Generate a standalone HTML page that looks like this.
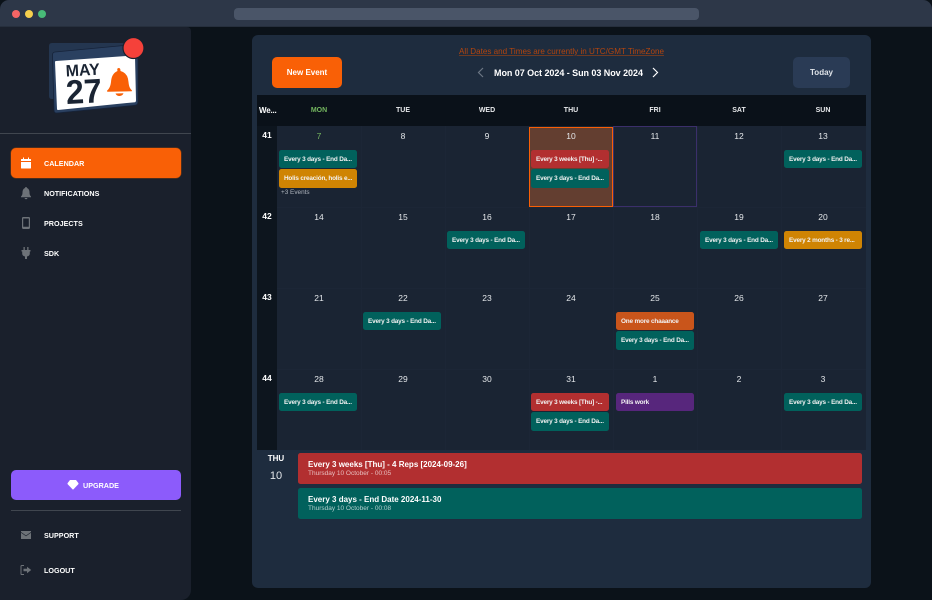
<!DOCTYPE html>
<html><head><meta charset="utf-8">
<style>
*{box-sizing:border-box}
html,body{margin:0;padding:0;width:932px;height:600px;overflow:hidden;background:#0b1219;font-family:"Liberation Sans",sans-serif;color:#fff}
.a{position:absolute}
#top{left:0;top:0;width:932px;height:27px;background:#2d3748;border-radius:9px 9px 0 0;border-bottom:1px solid #262f3d}
#side{left:0;top:27px;width:191px;height:573px;background:#1a202c;border-radius:0 4px 10px 0}
.d{width:8px;height:8px;border-radius:50%;top:10px}
.nav{left:44px;font-size:7.2px;font-weight:700;line-height:10px;white-space:nowrap}
#panel{left:252px;top:35px;width:619px;height:553px;background:#1e2c3e;border-radius:6px}
.num{width:84px;text-align:center;font-size:8.5px;line-height:10px;color:#e4e7ea}
.hd{width:84px;text-align:center;font-size:7px;font-weight:700;line-height:9px;top:106px;color:#e8eaec}
.wk{left:257px;width:20px;text-align:center;font-size:8.5px;font-weight:700;line-height:10px}
.e{width:78px;height:18.3px;border-radius:2.5px;font-size:6.4px;font-weight:700;line-height:19px;padding-left:5px;white-space:nowrap;overflow:hidden;color:#f2f2f2;letter-spacing:-.18px}
.t{background:#01615c}.r{background:#b22f30}.y{background:#cf8403}.o{background:#c9551b}.p{background:#57267c}
.big{left:298px;width:564px;height:31px;border-radius:2.5px}
.big b{position:absolute;left:10px;top:6px;font-size:8px;line-height:11px;white-space:nowrap}
.big span{position:absolute;left:10px;top:17px;font-size:6.5px;line-height:8px;white-space:nowrap;color:rgba(255,255,255,.68)}
.v{top:126px;width:1px;height:324px;background:#1c2636}
.h{left:277px;width:589px;height:1px;background:#1c2636}
</style></head><body>
<div class="a" id="top"></div>
<div class="a d" style="left:12px;background:#f56565"></div>
<div class="a d" style="left:25px;background:#f6d04d"></div>
<div class="a d" style="left:38px;background:#48bb78"></div>
<div class="a" style="left:234px;top:8px;width:465px;height:12px;border-radius:4px;background:#4a5568"></div>

<div class="a" id="side"></div>

<svg class="a" style="left:40px;top:30px" width="110" height="92" viewBox="40 30 110 92">
<path d="M52 43L128 43Q131 43 131 46V96Q131 99 128 99L52 99Q49 99 49 96V46Q49 43 52 43Z" fill="#243650"/>
<path d="M55 52L135 44.500Q138 44.300 138 47V102Q138 105 135 105.300L57 113Q54 113.300 54 110L52.500 55Q52.500 52.300 55 52Z" fill="#2a4060" stroke="#16233a" stroke-width=".8"/>
<path d="M56 61L134 55.500Q135 55.500 135 56.500L136 100Q136 102 135 102.200L58 110Q57 110 57 109L55 62Q55 61 56 61Z" fill="#fff"/>
<g transform="rotate(-3 66 76)" fill="#1a2433" font-family="'Liberation Sans',sans-serif" font-weight="700">
<text x="66" y="76.500" font-size="16.500" textLength="34" lengthAdjust="spacingAndGlyphs">MAY</text>
<text x="65" y="104" font-size="34" textLength="36" lengthAdjust="spacingAndGlyphs">27</text>
</g>
<path d="M117.500 68.500Q118 68 119 68Q120.500 68.300 120.500 71Q128 73 128.500 82C129 87 130 88.500 132 90.500L131.800 91.300L107.300 91.800L107 90.800C109.500 88.500 110.500 86 111 82Q111.500 73.500 117.500 71Q117 69.500 117.500 68.500Z" fill="#f96006"/>
<path d="M115.500 93.500L123.500 93.300Q122.500 96 119.500 96Q116.500 96 115.500 93.500Z" fill="#f96006"/>
<circle cx="133.500" cy="48" r="10.500" fill="#f5413a" stroke="#1a202c" stroke-width="1.200"/>
</svg>

<div class="a" style="left:0;top:133px;width:191px;height:1px;background:#40464f"></div>

<div class="a" style="left:11px;top:148px;width:170px;height:30px;background:#f96006;border-radius:5px;box-shadow:0 0 0 .5px #7a3a10"></div>
<svg class="a" style="left:20px;top:156px" width="12" height="14" viewBox="0 0 12 14"><path d="M1.500 3H3V1.500H4V3H8V1.500H9V3H10.500Q11 3 11 3.500V5H1V3.500Q1 3 1.500 3ZM1 6H11V12Q11 12.500 10.500 12.500H1.500Q1 12.500 1 12Z" fill="#fff"/></svg>
<div class="a nav" style="top:159px">CALENDAR</div>

<svg class="a" style="left:20px;top:186px" width="12" height="14" viewBox="0 0 12 14"><path d="M6 1Q7 1 7 2Q9.500 3 9.500 6.500C9.500 8.500 10 9.500 11 10.500V11.300H1V10.500C2 9.500 2.500 8.500 2.500 6.500Q2.500 3 5 2Q5 1 6 1ZM4.500 12H7.500Q7.200 13.300 6 13.300Q4.800 13.300 4.500 12Z" fill="#6d7278"/></svg>
<div class="a nav" style="top:189px">NOTIFICATIONS</div>

<svg class="a" style="left:20px;top:216px" width="12" height="14" viewBox="0 0 12 14"><path d="M3.200 1H8.800Q10 1 10 2.200V11.800Q10 13 8.800 13H3.200Q2 13 2 11.800V2.200Q2 1 3.200 1ZM3.200 2.500V10.800H8.800V2.500Z" fill="#6d7278"/></svg>
<div class="a nav" style="top:219px">PROJECTS</div>

<svg class="a" style="left:20px;top:246px" width="12" height="14" viewBox="0 0 12 14"><path d="M3.500 1H4.800V4H7.200V1H8.500V4H10.500V5.500H9.800V7.500Q9.800 10 7 10.500V13H5V10.500Q2.200 10 2.200 7.500V5.500H1.500V4H3.500Z" fill="#6d7278"/></svg>
<div class="a nav" style="top:249px">SDK</div>

<div class="a" style="left:11px;top:470px;width:170px;height:30px;background:#8c5bfb;border-radius:5px"></div>
<svg class="a" style="left:67px;top:479px" width="12" height="12" viewBox="0 0 12 12"><path d="M3 1H9L11.500 4.200V5L6.300 10.500H5.700L.500 5V4.200Z" fill="#fff"/></svg>
<div class="a nav" style="left:83px;top:481px">UPGRADE</div>
<div class="a" style="left:11px;top:510px;width:170px;height:1px;background:#40464f"></div>

<svg class="a" style="left:20px;top:529px" width="12" height="12" viewBox="0 0 12 12"><path d="M1 2H11V3L6 6.500L1 3Z" fill="#6d7278"/><path d="M1 3.800L6 7.300L11 3.800V10H1Z" fill="#6d7278"/></svg>
<div class="a nav" style="top:531px">SUPPORT</div>

<svg class="a" style="left:20px;top:564px" width="12" height="12" viewBox="0 0 12 12"><path d="M4 1.500H1.800Q1 1.500 1 2.300V9.700Q1 10.500 1.800 10.500H4" fill="none" stroke="#6d7278" stroke-width="1"/><path d="M7 2.700L11.200 6L7 9.300V7.300H3.500V4.700H7Z" fill="#6d7278"/></svg>
<div class="a nav" style="top:566px">LOGOUT</div>

<div class="a" id="panel"></div>
<div class="a" style="left:252px;width:619px;top:47px;text-align:center;font-size:8.1px;line-height:10px;color:#b3450f;text-decoration:underline;text-decoration-color:#6e3a22">All Dates and Times are currently in UTC/GMT TimeZone</div>
<div class="a" style="left:272px;top:57px;width:70px;height:31px;background:#f96006;border-radius:5px;text-align:center;font-size:8px;font-weight:700;line-height:32px">New Event</div>
<svg class="a" style="left:476px;top:67px" width="10" height="11" viewBox="0 0 10 11"><path d="M7 1L2.500 5.500L7 10" fill="none" stroke="#6d7785" stroke-width="1.200"/></svg>
<div class="a" style="left:494px;top:67px;font-size:9px;font-weight:700;line-height:12px;white-space:nowrap;letter-spacing:-.05px">Mon 07 Oct 2024 - Sun 03 Nov 2024</div>
<svg class="a" style="left:650px;top:67px" width="10" height="11" viewBox="0 0 10 11"><path d="M3 1L7.500 5.500L3 10" fill="none" stroke="#fff" stroke-width="1.200"/></svg>
<div class="a" style="left:793px;top:57px;width:57px;height:31px;background:#2a3b55;border-radius:5px;text-align:center;font-size:8px;font-weight:700;line-height:32px;color:#dfe3e8">Today</div>

<div class="a" style="left:257px;top:95px;width:609px;height:31px;background:#0a1119"></div>
<div class="a" style="left:257px;top:126px;width:20px;height:324px;background:#0d151e"></div>
<div class="a" style="left:259px;top:106px;font-size:8px;font-weight:700;line-height:10px;letter-spacing:-.2px">We...</div>

<div class="a hd" style="left:277px;color:#74b65f">MON</div>
<div class="a hd" style="left:361px">TUE</div>
<div class="a hd" style="left:445px">WED</div>
<div class="a hd" style="left:529px">THU</div>
<div class="a hd" style="left:613px">FRI</div>
<div class="a hd" style="left:697px">SAT</div>
<div class="a hd" style="left:781px">SUN</div>

<div class="a" style="left:277px;top:126px;width:589px;height:324px;background:#1a2433"></div>
<div class="a v" style="left:361px"></div>
<div class="a v" style="left:445px"></div>
<div class="a v" style="left:529px"></div>
<div class="a v" style="left:613px"></div>
<div class="a v" style="left:697px"></div>
<div class="a v" style="left:781px"></div>
<div class="a h" style="top:207px"></div>
<div class="a h" style="top:288px"></div>
<div class="a h" style="top:369px"></div>

<div class="a" style="left:529px;top:127px;width:84px;height:80px;background:#633e30;border:1.500px solid #f96006"></div>
<div class="a" style="left:613px;top:126px;width:84px;height:81px;border:1px solid #3b2f6b"></div>

<div class="a wk" style="top:130px">41</div>
<div class="a wk" style="top:211px">42</div>
<div class="a wk" style="top:292px">43</div>
<div class="a wk" style="top:373px">44</div>

<div class="a num" style="left:277px;top:131px;color:#74b65f">7</div>
<div class="a num" style="left:361px;top:131px">8</div>
<div class="a num" style="left:445px;top:131px">9</div>
<div class="a num" style="left:529px;top:131px">10</div>
<div class="a num" style="left:613px;top:131px">11</div>
<div class="a num" style="left:697px;top:131px">12</div>
<div class="a num" style="left:781px;top:131px">13</div>

<div class="a num" style="left:277px;top:212px">14</div>
<div class="a num" style="left:361px;top:212px">15</div>
<div class="a num" style="left:445px;top:212px">16</div>
<div class="a num" style="left:529px;top:212px">17</div>
<div class="a num" style="left:613px;top:212px">18</div>
<div class="a num" style="left:697px;top:212px">19</div>
<div class="a num" style="left:781px;top:212px">20</div>

<div class="a num" style="left:277px;top:293px">21</div>
<div class="a num" style="left:361px;top:293px">22</div>
<div class="a num" style="left:445px;top:293px">23</div>
<div class="a num" style="left:529px;top:293px">24</div>
<div class="a num" style="left:613px;top:293px">25</div>
<div class="a num" style="left:697px;top:293px">26</div>
<div class="a num" style="left:781px;top:293px">27</div>

<div class="a num" style="left:277px;top:374px">28</div>
<div class="a num" style="left:361px;top:374px">29</div>
<div class="a num" style="left:445px;top:374px">30</div>
<div class="a num" style="left:529px;top:374px">31</div>
<div class="a num" style="left:613px;top:374px">1</div>
<div class="a num" style="left:697px;top:374px">2</div>
<div class="a num" style="left:781px;top:374px">3</div>

<div class="a e t" style="left:279px;top:150px">Every 3 days - End Da...</div>
<div class="a e y" style="left:279px;top:169.300px">Holis creación, holis e...</div>
<div class="a" style="left:281px;top:188px;font-size:6.4px;line-height:9px;color:#aeb4bc">+3 Events</div>
<div class="a e r" style="left:531px;top:150px">Every 3 weeks [Thu] -...</div>
<div class="a e t" style="left:531px;top:169.300px">Every 3 days - End Da...</div>
<div class="a e t" style="left:784px;top:150px">Every 3 days - End Da...</div>

<div class="a e t" style="left:447px;top:231px">Every 3 days - End Da...</div>
<div class="a e t" style="left:700px;top:231px">Every 3 days - End Da...</div>
<div class="a e y" style="left:784px;top:231px">Every 2 months - 3 re...</div>

<div class="a e t" style="left:363px;top:312px">Every 3 days - End Da...</div>
<div class="a e o" style="left:616px;top:312px">One more chaaance</div>
<div class="a e t" style="left:616px;top:331.300px">Every 3 days - End Da...</div>

<div class="a e t" style="left:279px;top:393px">Every 3 days - End Da...</div>
<div class="a e r" style="left:531px;top:393px">Every 3 weeks [Thu] -...</div>
<div class="a e p" style="left:616px;top:393px">Pills work</div>
<div class="a e t" style="left:531px;top:412.300px">Every 3 days - End Da...</div>
<div class="a e t" style="left:784px;top:393px">Every 3 days - End Da...</div>

<div class="a" style="left:257px;top:454px;width:38px;text-align:center;font-size:8px;font-weight:700;line-height:10px">THU</div>
<div class="a" style="left:257px;top:470px;width:38px;text-align:center;font-size:11px;line-height:13px;color:#e4e7ea">10</div>

<div class="a big r" style="top:453px"><b>Every 3 weeks [Thu] - 4 Reps [2024-09-26]</b><span>Thursday 10 October - 00:05</span></div>
<div class="a big t" style="top:488px"><b>Every 3 days - End Date 2024-11-30</b><span>Thursday 10 October - 00:08</span></div>
</body></html>
